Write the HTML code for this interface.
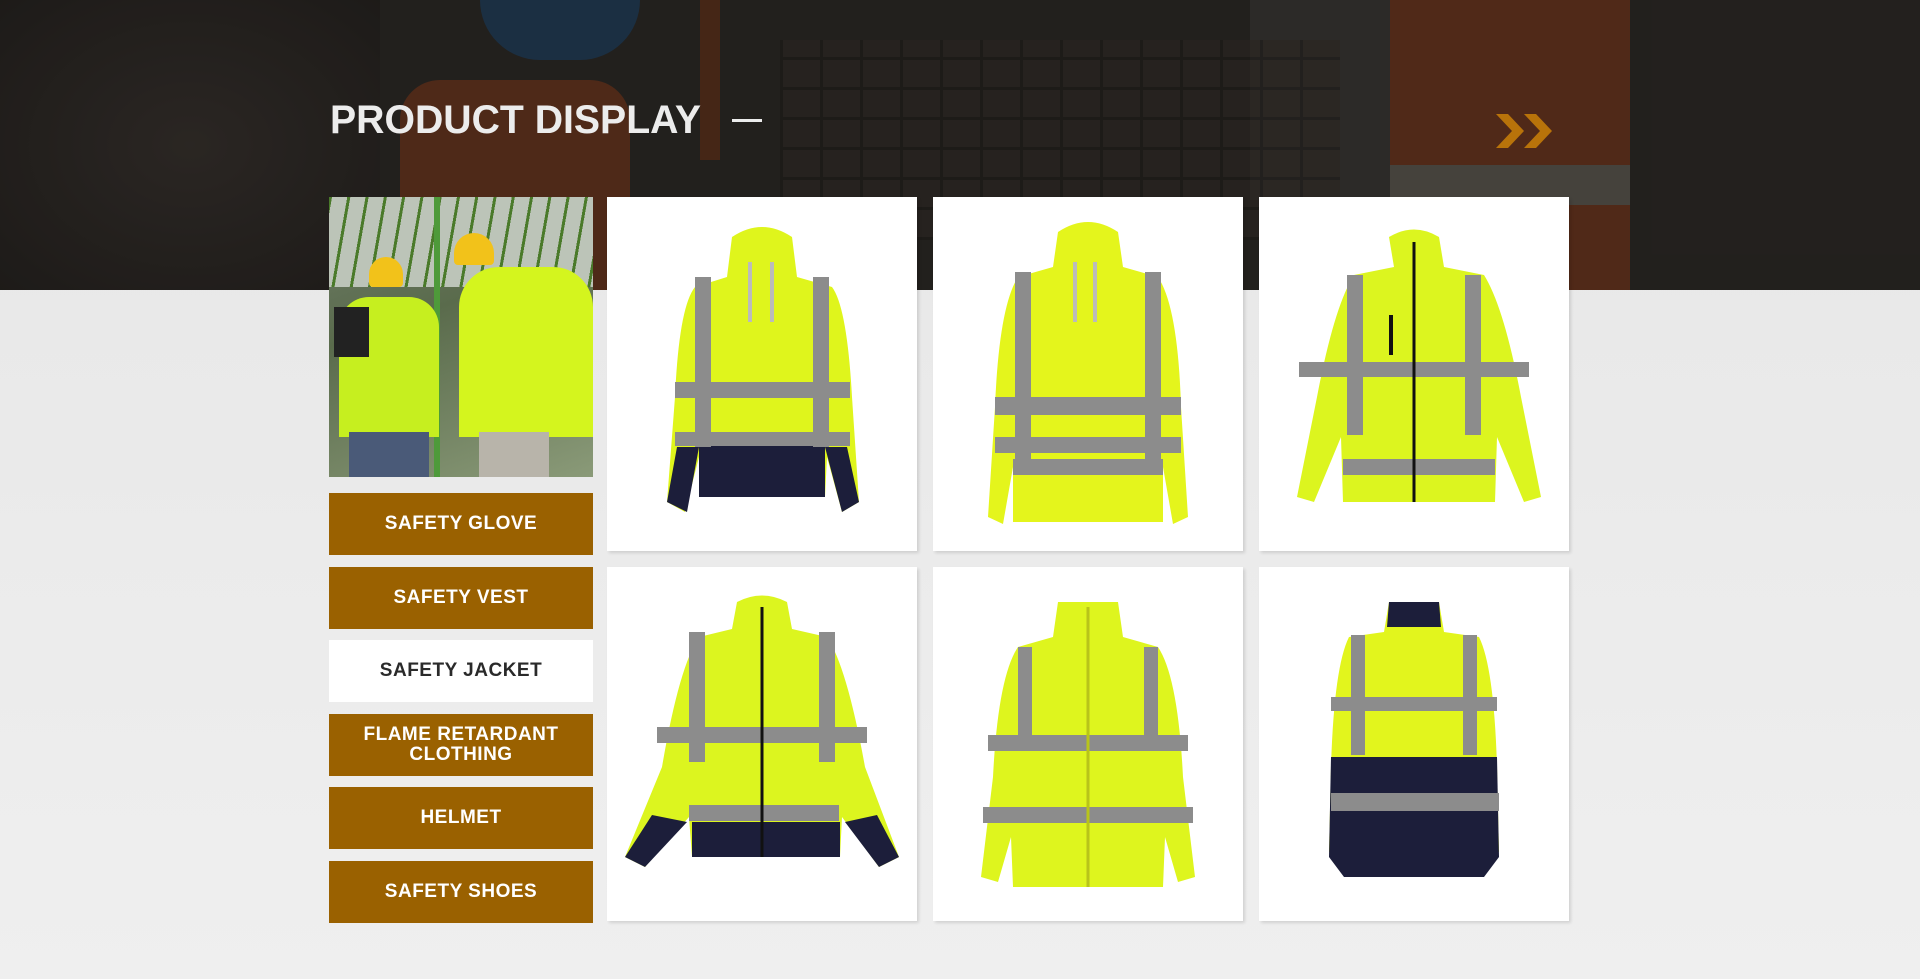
<!DOCTYPE html>
<html><head><meta charset="utf-8"><style>
*{margin:0;padding:0;box-sizing:border-box}
body{width:1920px;height:979px;overflow:hidden;background:linear-gradient(#e6e6e6,#efefef);font-family:"Liberation Sans",sans-serif;position:relative}
.banner{position:absolute;left:0;top:0;width:1920px;height:290px;background:#2b2826;overflow:hidden}
.banner div{position:absolute}
.ov{left:0;top:0;width:1920px;height:290px;background:rgba(25,22,20,.45)}
h1{position:absolute;left:330px;top:98px;color:#ececec;font-size:40px;font-weight:bold;transform:scaleX(.98);transform-origin:left;white-space:nowrap}
.dash{position:absolute;left:732px;top:119px;width:30px;height:3px;background:#ececec}
.lp{position:absolute;left:329px;top:197px;width:264px;height:280px;background:linear-gradient(160deg,#6f7d6a,#5a6b4c 40%,#8a9a78);overflow:hidden}
.btn{position:absolute;left:329px;width:264px;height:62px;background:#9a6100;color:#fff;font-weight:bold;font-size:19px;display:flex;align-items:center;justify-content:center;text-align:center;line-height:20px;letter-spacing:0.5px}
.btn.w{background:#fff;color:#2a2a2a}
.card{position:absolute;width:310px;height:354px;background:#fff;box-shadow:2px 2px 3px rgba(0,0,0,.12)}
.card svg{position:absolute;left:0;top:0}
</style></head><body>
<div class="banner">
<div style="left:400px;top:80px;width:230px;height:210px;background:#7a3a1c;border-radius:40px 40px 0 0"></div>
<div style="left:480px;top:0;width:160px;height:60px;background:#1e4468;border-radius:0 0 60px 60px"></div>
<div style="left:700px;top:0;width:20px;height:160px;background:#6a3418"></div>
<div style="left:1360px;top:0;width:270px;height:290px;background:#7e3a1c"></div>
<div style="left:1360px;top:165px;width:270px;height:40px;background:#6a675e"></div>
<div style="left:1250px;top:0;width:140px;height:200px;background:#3d3b3a"></div>
<div style="left:780px;top:40px;width:560px;height:200px;background:repeating-linear-gradient(0deg,#1a1816 0 3px,transparent 3px 30px),repeating-linear-gradient(90deg,#1a1816 0 3px,#3a302a 3px 40px);opacity:.5"></div>
<div style="left:0;top:0;width:380px;height:290px;background:radial-gradient(#3a3430,#221f1d);"></div>
<div class="ov"></div>
</div>
<h1>PRODUCT DISPLAY</h1>
<div class="dash"></div>
<svg style="position:absolute;left:1494px;top:112px" width="64" height="38"><path d="M2 2 L14 2 L30 19 L14 36 L2 36 L18 19Z M30 2 L42 2 L58 19 L42 36 L30 36 L46 19Z" fill="#b8730a"/></svg>
<div class="lp">
<div style="position:absolute;left:0;top:0;width:264px;height:90px;background:repeating-linear-gradient(100deg,#4a7a2a 0 3px,#bcc4b8 3px 18px)"></div>
<div style="position:absolute;left:105px;top:0;width:6px;height:280px;background:#4e9a3a"></div>
<div style="position:absolute;left:10px;top:100px;width:100px;height:140px;background:#c6ef1f;border-radius:30px 30px 0 0"></div>
<div style="position:absolute;left:40px;top:60px;width:34px;height:30px;background:#f2c21a;border-radius:17px 17px 4px 4px"></div>
<div style="position:absolute;left:130px;top:70px;width:134px;height:170px;background:#d4f51e;border-radius:40px 40px 0 0"></div>
<div style="position:absolute;left:125px;top:36px;width:40px;height:32px;background:#f2c21a;border-radius:20px 20px 4px 4px"></div>
<div style="position:absolute;left:20px;top:235px;width:80px;height:45px;background:#4a5a78"></div>
<div style="position:absolute;left:150px;top:235px;width:70px;height:45px;background:#b8b4aa"></div>
<div style="position:absolute;left:5px;top:110px;width:35px;height:50px;background:#222"></div>
</div>
<div class="btn" style="top:493px">SAFETY GLOVE</div>
<div class="btn" style="top:567px">SAFETY VEST</div>
<div class="btn w" style="top:640px">SAFETY JACKET</div>
<div class="btn" style="top:714px">FLAME RETARDANT<br>CLOTHING</div>
<div class="btn" style="top:787px">HELMET</div>
<div class="btn" style="top:861px">SAFETY SHOES</div>

<div class="card" style="left:607px;top:197px"><svg width="310" height="354"><path d="M125 40 Q155 20 185 40 L190 80 L225 90 Q240 110 245 200 L252 305 L235 315 L220 260 L218 300 L95 300 L92 260 L78 315 L60 305 L68 200 Q72 110 88 90 L120 80 Z" fill="#dff51c"/><path d="M92 245 L218 245 L218 300 L92 300 Z M70 250 L92 250 L80 315 L60 305Z M218 250 L240 250 L252 305 L235 315Z" fill="#1c1e3a"/><rect x="88" y="80" width="16" height="170" fill="#8c8c8c"/><rect x="206" y="80" width="16" height="170" fill="#8c8c8c"/><rect x="68" y="185" width="175" height="16" fill="#8c8c8c"/><rect x="68" y="235" width="175" height="14" fill="#8c8c8c"/><path d="M143 65 L143 125 M165 65 L165 125" stroke="#bbb" stroke-width="4"/></svg></div>
<div class="card" style="left:933px;top:197px"><svg width="310" height="354"><path d="M125 35 Q155 15 185 35 L190 70 L225 80 Q245 110 248 210 L255 320 L240 327 L230 270 L230 325 L80 325 L80 270 L70 327 L55 320 L62 210 Q66 110 85 80 L120 70 Z" fill="#e4f51c"/><rect x="82" y="75" width="16" height="200" fill="#8c8c8c"/><rect x="212" y="75" width="16" height="200" fill="#8c8c8c"/><rect x="62" y="200" width="186" height="18" fill="#8c8c8c"/><rect x="62" y="240" width="186" height="16" fill="#8c8c8c"/><rect x="80" y="262" width="150" height="16" fill="#8c8c8c"/><path d="M142 65 L142 125 M162 65 L162 125" stroke="#bbb" stroke-width="4"/></svg></div>
<div class="card" style="left:1259px;top:197px"><svg width="310" height="354"><path d="M130 40 Q155 25 180 40 L185 70 L225 78 Q245 110 262 200 L282 300 L265 305 L238 240 L236 305 L84 305 L82 240 L55 305 L38 300 L58 200 Q75 110 95 78 L135 70 Z" fill="#dcf51f"/><rect x="88" y="78" width="16" height="160" fill="#8c8c8c"/><rect x="206" y="78" width="16" height="160" fill="#8c8c8c"/><rect x="40" y="165" width="230" height="15" fill="#8c8c8c"/><rect x="84" y="262" width="152" height="16" fill="#8c8c8c"/><path d="M155 45 L155 305" stroke="#111" stroke-width="3"/><rect x="130" y="118" width="4" height="40" fill="#111"/></svg></div>
<div class="card" style="left:607px;top:567px"><svg width="310" height="354"><path d="M130 35 Q155 22 180 35 L185 62 L220 70 Q240 100 258 200 L292 290 L272 300 L235 250 L233 290 L85 290 L82 250 L38 300 L18 290 L55 200 Q72 100 92 70 L125 62 Z" fill="#dcf51f"/><path d="M85 255 L233 255 L233 290 L85 290Z M45 248 L80 255 L38 300 L18 290Z M238 255 L270 248 L292 290 L272 300Z" fill="#1c1e3a"/><rect x="82" y="65" width="16" height="130" fill="#8c8c8c"/><rect x="212" y="65" width="16" height="130" fill="#8c8c8c"/><rect x="50" y="160" width="210" height="16" fill="#8c8c8c"/><rect x="82" y="238" width="150" height="16" fill="#8c8c8c"/><path d="M155 40 L155 290" stroke="#111" stroke-width="3"/></svg></div>
<div class="card" style="left:933px;top:567px"><svg width="310" height="354"><path d="M125 35 L185 35 L190 70 L225 80 Q245 110 250 210 L262 310 L245 315 L232 270 L230 320 L80 320 L78 270 L65 315 L48 310 L60 210 Q65 110 85 80 L120 70 Z" fill="#def51e"/><rect x="55" y="168" width="200" height="16" fill="#8c8c8c"/><rect x="50" y="240" width="210" height="16" fill="#8c8c8c"/><rect x="85" y="80" width="14" height="90" fill="#8c8c8c"/><rect x="211" y="80" width="14" height="90" fill="#8c8c8c"/><path d="M155 40 L155 320" stroke="#b8c41a" stroke-width="3"/></svg></div>
<div class="card" style="left:1259px;top:567px"><svg width="310" height="354"><path d="M130 35 L180 35 L185 65 L220 70 Q235 100 238 200 L240 285 L70 285 L72 200 Q75 100 90 70 L125 65 Z" fill="#e2f51d"/><path d="M130 35 L180 35 L182 60 L128 60Z" fill="#1c1e3a"/><path d="M72 190 L238 190 L240 290 L225 310 L85 310 L70 290Z" fill="#1c1e3a"/><rect x="92" y="68" width="14" height="120" fill="#8c8c8c"/><rect x="204" y="68" width="14" height="120" fill="#8c8c8c"/><rect x="72" y="130" width="166" height="14" fill="#8c8c8c"/><rect x="72" y="226" width="168" height="18" fill="#8c8c8c"/></svg></div>
</body></html>
